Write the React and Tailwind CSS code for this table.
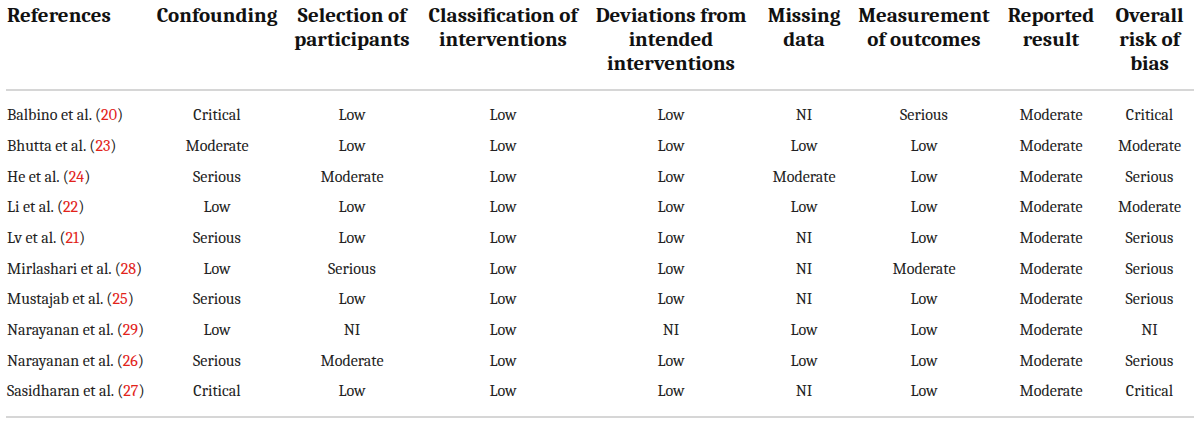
const HEADERS = [
  ['References'],
  ['Confounding'],
  ['Selection of', 'participants'],
  ['Classification of', 'interventions'],
  ['Deviations from', 'intended', 'interventions'],
  ['Missing', 'data'],
  ['Measurement', 'of outcomes'],
  ['Reported', 'result'],
  ['Overall', 'risk of', 'bias'],
]

const ROWS = [
  ['Balbino et al.', '20', 'Critical', 'Low', 'Low', 'Low', 'NI', 'Serious', 'Moderate', 'Critical'],
  ['Bhutta et al.', '23', 'Moderate', 'Low', 'Low', 'Low', 'Low', 'Low', 'Moderate', 'Moderate'],
  ['He et al.', '24', 'Serious', 'Moderate', 'Low', 'Low', 'Moderate', 'Low', 'Moderate', 'Serious'],
  ['Li et al.', '22', 'Low', 'Low', 'Low', 'Low', 'Low', 'Low', 'Moderate', 'Moderate'],
  ['Lv et al.', '21', 'Serious', 'Low', 'Low', 'Low', 'NI', 'Low', 'Moderate', 'Serious'],
  ['Mirlashari et al.', '28', 'Low', 'Serious', 'Low', 'Low', 'NI', 'Moderate', 'Moderate', 'Serious'],
  ['Mustajab et al.', '25', 'Serious', 'Low', 'Low', 'Low', 'NI', 'Low', 'Moderate', 'Serious'],
  ['Narayanan et al.', '29', 'Low', 'NI', 'Low', 'NI', 'Low', 'Low', 'Moderate', 'NI'],
  ['Narayanan et al.', '26', 'Serious', 'Moderate', 'Low', 'Low', 'Low', 'Low', 'Moderate', 'Serious'],
  ['Sasidharan et al.', '27', 'Critical', 'Low', 'Low', 'Low', 'NI', 'Low', 'Moderate', 'Critical'],
]

const COLS = 'grid grid-cols-[144px_134px_136px_166px_170px_96px_144px_110px_87px]'

export default function App() {
  return (
    <div className="w-[1200px] h-[423px] bg-white px-[6px] font-serif">
      <div className={`${COLS} pt-[3px] pb-[14px] border-b-2 border-[#d6d6d6] text-[21px] leading-[24px] font-bold text-[#111]`}>
        {HEADERS.map((lines, i) => (
          <div key={i} className={`flex flex-col ${i === 0 ? 'items-start pl-[1px]' : 'items-center'}`}>
            {lines.map(l => (
              <span key={l} className="whitespace-nowrap">{l}</span>
            ))}
          </div>
        ))}
      </div>

      <div className="pt-[9px] pb-[9px] border-b-2 border-[#d6d6d6] text-[16px] text-[#222]">
        {ROWS.map((r, i) => (
          <div key={i} className={`${COLS} h-[30.67px] items-center`}>
            <div className="pl-[1px] whitespace-nowrap">
              {r[0]} (<span className="text-[#e2231a]">{r[1]}</span>)
            </div>
            {r.slice(2).map((v, j) => (
              <div key={j} className="flex justify-center whitespace-nowrap">{v}</div>
            ))}
          </div>
        ))}
      </div>
    </div>
  )
}
